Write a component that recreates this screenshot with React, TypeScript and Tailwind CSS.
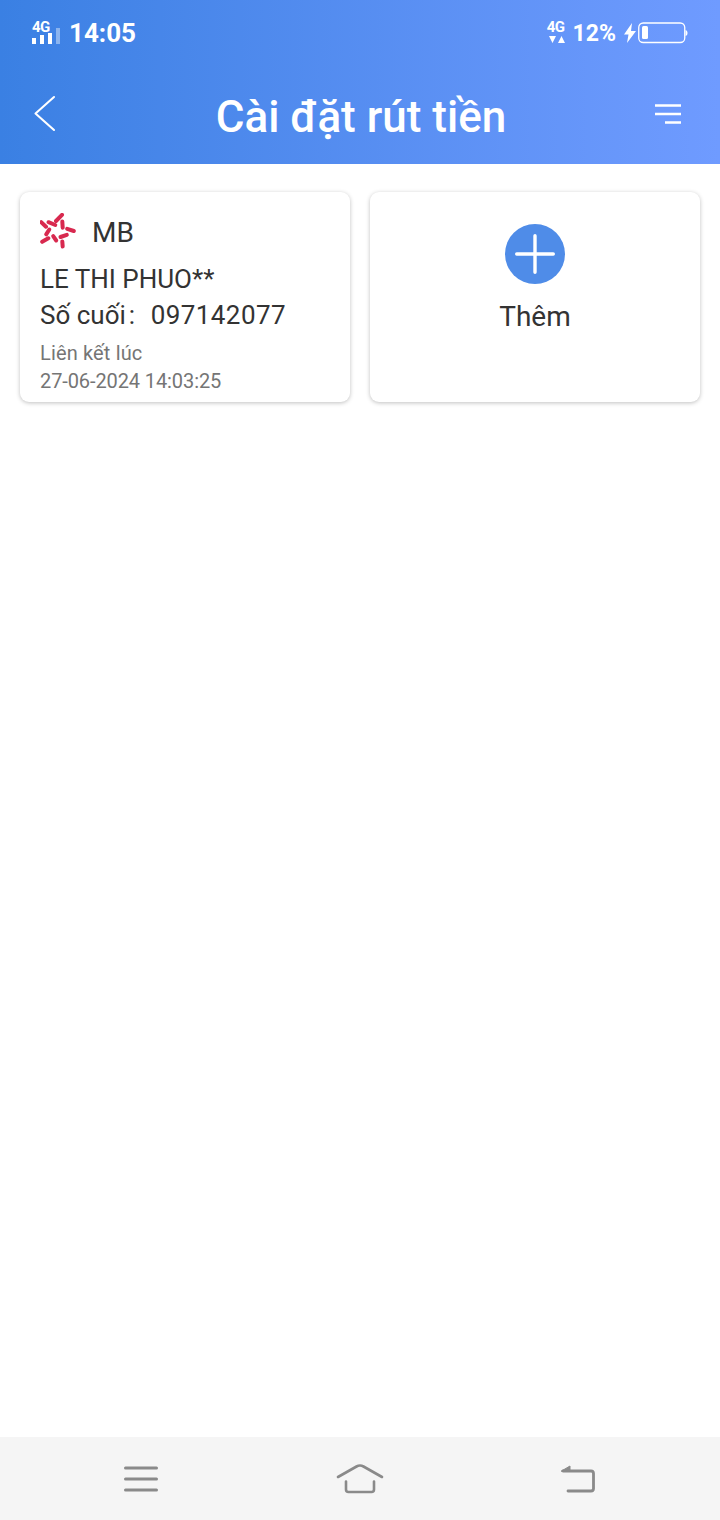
import React from "react";

const bars = [
  "h-[6px] opacity-100",
  "h-[9px] opacity-100",
  "h-[11px] opacity-100",
  "h-[16px] opacity-40",
];

function Signal() {
  return (
    <div className="relative mb-[3px] h-[24px] w-[28px]">
      <span className="absolute left-0 top-0 text-[15px] leading-[14px] font-bold tracking-[-0.5px] text-white">
        4G
      </span>
      <div className="absolute bottom-0 left-0 flex items-end gap-[4px]">
        {bars.map((b, i) => (
          <span key={i} className={`w-[4px] bg-white ${b}`} />
        ))}
      </div>
    </div>
  );
}

function MbLogo() {
  const pills = [
    [22, 1.8, 16, 8],
    [1.2, 9.2, 6, 13.7],
    [8.5, 9.2, 15.3, 12],
    [22.3, 8.5, 22.7, 14.7],
    [27.2, 15.8, 33.8, 18],
    [26.8, 21.8, 20.5, 24],
    [22.3, 28.5, 22.7, 33.5],
    [16.2, 27.5, 13.2, 23.2],
    [2.2, 28.8, 8.3, 25.3],
    [6.2, 21.3, 9.3, 16.5],
  ];
  return (
    <svg width="36" height="36" viewBox="0 0 36 36" fill="none" stroke="#d8294f" strokeWidth="4" strokeLinecap="round">
      {pills.map(([x1, y1, x2, y2], i) => (
        <line key={i} x1={x1} y1={y1} x2={x2} y2={y2} />
      ))}
    </svg>
  );
}

export default function App() {
  return (
    <div className="flex h-[1520px] w-[720px] flex-col bg-white font-['Roboto',sans-serif]">
      {/* Header */}
      <div className="h-[164px] bg-gradient-to-r from-[#3a80e3] to-[#6f9bff]">
        <div className="flex h-[66px] items-center justify-between pl-[32px] pr-[32px]">
          <div className="flex items-center gap-[9px]">
            <Signal />
            <span className="text-[26px] font-bold leading-none text-white">14:05</span>
          </div>
          <div className="flex items-center">
            <div className="flex h-[26px] w-[20px] flex-col items-center">
              <span className="text-[15px] font-bold leading-[15px] tracking-[-0.5px] text-white">4G</span>
              <svg width="18" height="9" viewBox="0 0 18 9" fill="white">
                <path d="M2 1h7L5.500 8zM11 8h7l-3.500-7z" />
              </svg>
            </div>
            <span className="ml-[7px] text-[23px] font-bold leading-none text-white">12%</span>
            <svg className="ml-[8px]" width="12" height="20" viewBox="0 0 12 20" fill="white">
              <path d="M8 0 0 11.500h4.500L3 20l9-12H7z" />
            </svg>
            <svg className="ml-[2px]" width="50" height="22" viewBox="0 0 50 22" fill="none">
              <rect x="0.750" y="1" width="46" height="19.500" rx="4.500" stroke="white" strokeWidth="1.300" />
              <rect x="4" y="4" width="6" height="13" rx="1.500" fill="white" />
              <path d="M47.500 8c1.500.500 2 1.500 2 3s-.500 2.500-2 3z" fill="white" />
            </svg>
          </div>
        </div>
        <div className="flex h-[98px] items-start justify-between pl-[33px] pr-[38px]">
          <div className="w-[35px]">
            <svg className="mt-[29px]" width="24" height="37" viewBox="0 0 24 37" fill="none" stroke="white" strokeWidth="2.100" strokeLinecap="round" strokeLinejoin="round">
              <path d="M21 2 2.500 18.500 21 35" />
            </svg>
          </div>
          <h1 className="mt-[23px] text-[44px] font-medium leading-[56px] text-white">Cài đặt rút tiền</h1>
          <svg className="mt-[36px]" width="28" height="24" viewBox="0 0 28 24" fill="none" stroke="white" strokeWidth="2.700">
            <path d="M1 3.500h26M1 12h26M11 20.500h16" />
          </svg>
        </div>
      </div>

      {/* Cards */}
      <div className="flex flex-1 items-start gap-[20px] px-[20px] pt-[28px]">
        <div className="h-[210px] w-[330px] rounded-[9px] bg-white pl-[20px] pt-[21px] text-[#333333] shadow-[0_1px_4px_rgba(0,0,0,0.25)]">
          <div className="flex h-[36px] items-center gap-[16px]">
            <MbLogo />
            <span className="mt-[3px] text-[28px] leading-none">MB</span>
          </div>
          <p className="mt-[12px] text-[26px] leading-[36px]">LE THI PHUO**</p>
          <div className="flex text-[26px] leading-[36px]">
            <span>Số cuối</span>
            <span className="ml-[3px] w-[22px]">:</span>
            <span className="tracking-[0.4px]">097142077</span>
          </div>
          <div className="mt-[6px] text-[20px] leading-[28px] text-[#757575]">
            <p className="tracking-[0.15px]">Liên kết lúc</p>
            <p className="tracking-[-0.1px]">27-06-2024 14:03:25</p>
          </div>
        </div>
        <div className="flex h-[210px] w-[330px] flex-col items-center rounded-[9px] bg-white pt-[32px] shadow-[0_1px_4px_rgba(0,0,0,0.25)]">
          <div className="flex h-[60px] w-[60px] items-center justify-center rounded-full bg-[#4f8ce8]">
            <svg width="40" height="40" viewBox="0 0 40 40" fill="none" stroke="white" strokeWidth="3.400" strokeLinecap="round">
              <path d="M20 1.700v36.600M1.700 20h36.600" />
            </svg>
          </div>
          <span className="mt-[13px] text-[28px] leading-[40px] text-[#333333]">Thêm</span>
        </div>
      </div>

      {/* Nav bar */}
      <div className="flex h-[83px] items-center justify-between bg-[#f5f5f5] pl-[123px] pr-[124px]">
        <svg width="36" height="28" viewBox="0 0 36 28" fill="none" stroke="#8a8a8a" strokeWidth="3" strokeLinecap="round">
          <path d="M2.500 3h31M2.500 14h31M2.500 25h31" />
        </svg>
        <svg width="50" height="32" viewBox="0 0 50 32" fill="none" stroke="#8a8a8a" strokeWidth="2.600" strokeLinecap="round" strokeLinejoin="round">
          <path d="M3 14 21.500 3.500c2.300-1.300 4.700-1.300 7 0L47 14" />
          <path d="M11 18.500v8c0 1.500 1 2.500 2.500 2.500h23c1.500 0 2.500-1 2.500-2.500v-8" />
        </svg>
        <svg width="36" height="30" viewBox="0 0 36 30" fill="none" stroke="#8a8a8a" strokeWidth="2.800" strokeLinecap="round" strokeLinejoin="round">
          <path d="M3 7h28c1.500 0 2.500 1 2.500 2.500v15c0 1.500-1 2.500-2.500 2.500H8" />
          <path d="M1.500 7 10 2v5z" fill="#8a8a8a" strokeWidth="1" />
        </svg>
      </div>
    </div>
  );
}
